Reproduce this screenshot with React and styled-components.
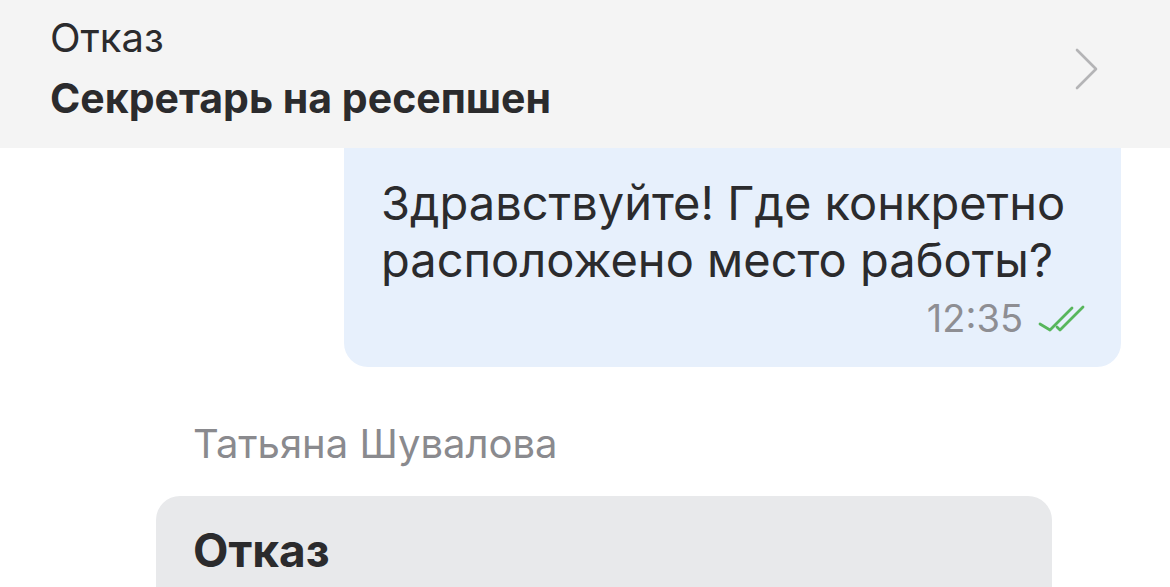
import React from 'react';
import styled, { createGlobalStyle } from 'styled-components';

const GlobalStyle = createGlobalStyle`
  * { box-sizing: border-box; }
  html, body {
    margin: 0;
    padding: 0;
    background: #ffffff;
    font-family: Inter, 'Noto Sans', 'Liberation Sans', sans-serif;
    color: #2b2b2d;
    overflow: hidden;
  }
`;

const Screen = styled.div`
  width: 1170px;
  height: 587px;
  overflow: hidden;
  background: #ffffff;
`;

const Header = styled.header`
  position: relative;
  z-index: 1;
  height: 148px;
  padding: 8px 70px 0 50px;
  background: #f4f4f4;
  display: flex;
  align-items: flex-start;
  justify-content: space-between;
`;

const HeaderText = styled.div`
  display: flex;
  flex-direction: column;
  line-height: 60px;
`;

const Status = styled.span`
  font-size: 40px;
  font-weight: 400;
`;

const Vacancy = styled.span`
  font-size: 41px;
  font-weight: 700;
`;

const Chevron = styled.svg`
  margin-top: 39px;
  flex: none;
`;

const Feed = styled.main`
  display: flex;
  flex-direction: column;
`;

const Outgoing = styled.div`
  align-self: flex-end;
  width: 777px;
  margin: -30px 49px 0 0;
  padding: 56px 36px 29px 37px;
  background: #e7f0fc;
  border-radius: 24px;
`;

const MessageText = styled.p`
  margin: 0;
  font-size: 47px;
  line-height: 57px;
  color: #2b2b2d;
`;

const Meta = styled.div`
  display: flex;
  justify-content: flex-end;
  align-items: center;
  gap: 15px;
  margin-top: 10px;
`;

const Time = styled.span`
  font-size: 38px;
  line-height: 40px;
  color: #8e8e93;
`;

const Incoming = styled.div`
  display: flex;
  flex-direction: column;
  margin: 52px 0 0 156px;
  width: 896px;
`;

const Author = styled.span`
  padding-left: 37px;
  font-size: 40px;
  line-height: 50px;
  color: #8a8a8e;
`;

const Card = styled.div`
  margin-top: 27px;
  padding: 24px 37px 40px;
  background: #e8e9eb;
  border-radius: 24px 24px 0 0;
`;

const CardTitle = styled.div`
  font-size: 46px;
  font-weight: 700;
  line-height: 60px;
  color: #2b2b2d;
`;

const ReadMark = () => (
  <svg width="47" height="29" viewBox="0 0 47 29" fill="none">
    <path d="M2 20 L12 26 L34 4" stroke="#57b65c" strokeWidth="2.8" strokeLinecap="round" strokeLinejoin="round" />
    <path d="M19 23 L22 26 L45 3" stroke="#57b65c" strokeWidth="2.8" strokeLinecap="round" strokeLinejoin="round" />
  </svg>
);

const App = () => {
  return (
    <Screen>
      <GlobalStyle />
      <Header>
        <HeaderText>
          <Status>Отказ</Status>
          <Vacancy>Секретарь на ресепшен</Vacancy>
        </HeaderText>
        <Chevron width="26" height="44" viewBox="0 0 26 44" fill="none">
          <path d="M3 3 L22 22 L3 41" stroke="#b4b4b6" strokeWidth="2.6" strokeLinecap="round" strokeLinejoin="round" />
        </Chevron>
      </Header>
      <Feed>
        <Outgoing>
          <MessageText>
            Здравствуйте! Где конкретно
            <br />
            расположено место работы?
          </MessageText>
          <Meta>
            <Time>12:35</Time>
            <ReadMark />
          </Meta>
        </Outgoing>
        <Incoming>
          <Author>Татьяна Шувалова</Author>
          <Card>
            <CardTitle>Отказ</CardTitle>
          </Card>
        </Incoming>
      </Feed>
    </Screen>
  );
};

export default App;
